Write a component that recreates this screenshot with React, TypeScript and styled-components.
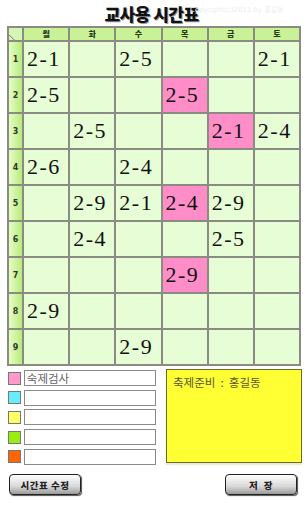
import styled, { createGlobalStyle } from "styled-components";

const GlobalStyle = createGlobalStyle`
  html, body {
    margin: 0;
    padding: 0;
    background: #ffffff;
  }
  body {
    font-family: "Noto Sans CJK KR", "Noto Sans", sans-serif;
  }
`;

const days = ["월", "화", "수", "목", "금", "토"];

// [row][day] -> class, pink flag
const timetable: ({ text: string; pink?: boolean } | null)[][] = [
  [{ text: "2-1" }, null, { text: "2-5" }, null, null, { text: "2-1" }],
  [{ text: "2-5" }, null, null, { text: "2-5", pink: true }, null, null],
  [null, { text: "2-5" }, null, null, { text: "2-1", pink: true }, { text: "2-4" }],
  [{ text: "2-6" }, null, { text: "2-4" }, null, null, null],
  [null, { text: "2-9" }, { text: "2-1" }, { text: "2-4", pink: true }, { text: "2-9" }, null],
  [null, { text: "2-4" }, null, null, { text: "2-5" }, null],
  [null, null, null, { text: "2-9", pink: true }, null, null],
  [{ text: "2-9" }, null, null, null, null, null],
  [null, null, { text: "2-9" }, null, null, null],
];

const legend = [
  { color: "#ff99cc", text: "숙제검사" },
  { color: "#66eeff", text: "" },
  { color: "#ffff66", text: "" },
  { color: "#99ee11", text: "" },
  { color: "#ff6600", text: "" },
];

const App = () => {
  return (
    <Page>
      <GlobalStyle />
      <TitleBar>
        <Title>교사용 시간표</Title>
        <Watermark>Copyright(c)2011 by 홍길동</Watermark>
      </TitleBar>

      <Grid>
        <Corner>
          <svg width="100%" height="100%" viewBox="0 0 13 12" preserveAspectRatio="none">
            <line x1="0" y1="0" x2="13" y2="12" stroke="#666" strokeWidth="0.8" />
          </svg>
        </Corner>
        { days.map(day => (
          <DayHead key={ day }>{ day }</DayHead>
        )) }

        { timetable.map((row, r) => (
          <Row key={ r }>
            <PeriodHead>{ r + 1 }</PeriodHead>
            { row.map((cell, d) => (
              <Cell key={ d } $pink={ !!cell?.pink }>
                { cell?.text }
              </Cell>
            )) }
          </Row>
        )) }
      </Grid>

      <Bottom>
        <Legend>
          { legend.map((item, i) => (
            <LegendRow key={ i }>
              <Swatch $color={ item.color } />
              <LegendInput>{ item.text }</LegendInput>
            </LegendRow>
          )) }
        </Legend>

        <Sticky>축제준비&nbsp;&nbsp;:&nbsp;&nbsp;홍길동</Sticky>
      </Bottom>

      <Buttons>
        <Button>시간표 수정</Button>
        <Button>저&nbsp;&nbsp;장</Button>
      </Buttons>
    </Page>
  );
};

const Page = styled.div`
  width: 307px;
  height: 512px;
  overflow: hidden;
`;

const TitleBar = styled.div`
  position: relative;
  height: 26px;
  display: flex;
  align-items: flex-start;
  justify-content: center;
`;

const Title = styled.div`
  margin-top: 1px;
  margin-left: -4px;
  font-size: 17px;
  font-weight: 900;
  color: #111;
  letter-spacing: -0.5px;
  text-shadow: 1px 1px 0 #999;
`;

const Watermark = styled.div`
  position: absolute;
  left: 190px;
  top: 4px;
  font-size: 7px;
  color: #eeeeee;
  font-family: "DejaVu Sans", "Noto Sans CJK KR", sans-serif;
`;

const Grid = styled.div`
  margin-left: 7px;
  width: 294px;
  box-sizing: border-box;
  display: grid;
  grid-template-columns: 13px repeat(6, 1fr);
  grid-template-rows: 12px;
  grid-auto-rows: 34px;
  gap: 2px;
  padding: 2px;
  background: #8a8c84;
`;

const Row = styled.div`
  display: contents;
`;

const Corner = styled.div`
  background: #d6f5b4;
  overflow: hidden;
`;

const DayHead = styled.div`
  background: #c9f296;
  display: flex;
  align-items: center;
  justify-content: center;
  font-size: 8px;
  font-weight: 900;
  color: #2a3a1a;
  line-height: 1;
`;

const PeriodHead = styled.div`
  background: linear-gradient(to right, #e4fcc4, #b8ec7c);
  display: flex;
  align-items: center;
  justify-content: center;
  font-family: "DejaVu Sans", sans-serif;
  font-size: 8px;
  font-weight: bold;
  color: #333;
`;

const Cell = styled.div<{ $pink: boolean }>`
  background: ${ p => (p.$pink ? "#ff8ec8" : "#e6fdd6") };
  display: flex;
  align-items: center;
  padding-left: 3px;
  font-family: "Liberation Serif", "DejaVu Serif", serif;
  font-size: 22px;
  letter-spacing: 1.5px;
  color: #111;
  white-space: nowrap;
  overflow: hidden;
`;

const Bottom = styled.div`
  display: flex;
  justify-content: space-between;
  padding: 4px 5px 0 8px;
  height: 104px;
  box-sizing: border-box;
`;

const Legend = styled.div`
  display: flex;
  flex-direction: column;
  gap: 3.7px;
  width: 148px;
`;

const LegendRow = styled.div`
  display: flex;
  align-items: center;
  gap: 3px;
`;

const Swatch = styled.div<{ $color: string }>`
  width: 11px;
  height: 11px;
  background: ${ p => p.$color };
  border: 1px solid #777;
`;

const LegendInput = styled.div`
  width: 130px;
  height: 14px;
  border: 1px solid #8a8a8a;
  background: #fff;
  font-size: 11.5px;
  line-height: 14px;
  color: #666;
  padding-left: 2px;
  box-sizing: content-box;
`;

const Sticky = styled.div`
  width: 136px;
  height: 94px;
  margin-top: -1px;
  box-sizing: border-box;
  background: #ffff33;
  border: 1px solid #6b6b2a;
  box-shadow: 0 2px 1px #eeead8;
  padding: 4px 6px;
  font-size: 11.5px;
  color: #555533;
`;

const Buttons = styled.div`
  display: flex;
  justify-content: space-between;
  padding: 4px 10px 0 9px;
`;

const Button = styled.div`
  width: 72px;
  height: 21px;
  box-sizing: border-box;
  border: 1.5px solid #222;
  border-radius: 4px;
  background: linear-gradient(to bottom, #ffffff, #d8d8d8 60%, #9a9a9a);
  box-shadow: 1px 1px 1px #555;
  display: flex;
  align-items: center;
  justify-content: center;
  font-size: 9.5px;
  font-weight: 900;
  color: #222;
  text-shadow: 0 0 1px #fff;
  letter-spacing: 0.5px;
`;

export default App;
